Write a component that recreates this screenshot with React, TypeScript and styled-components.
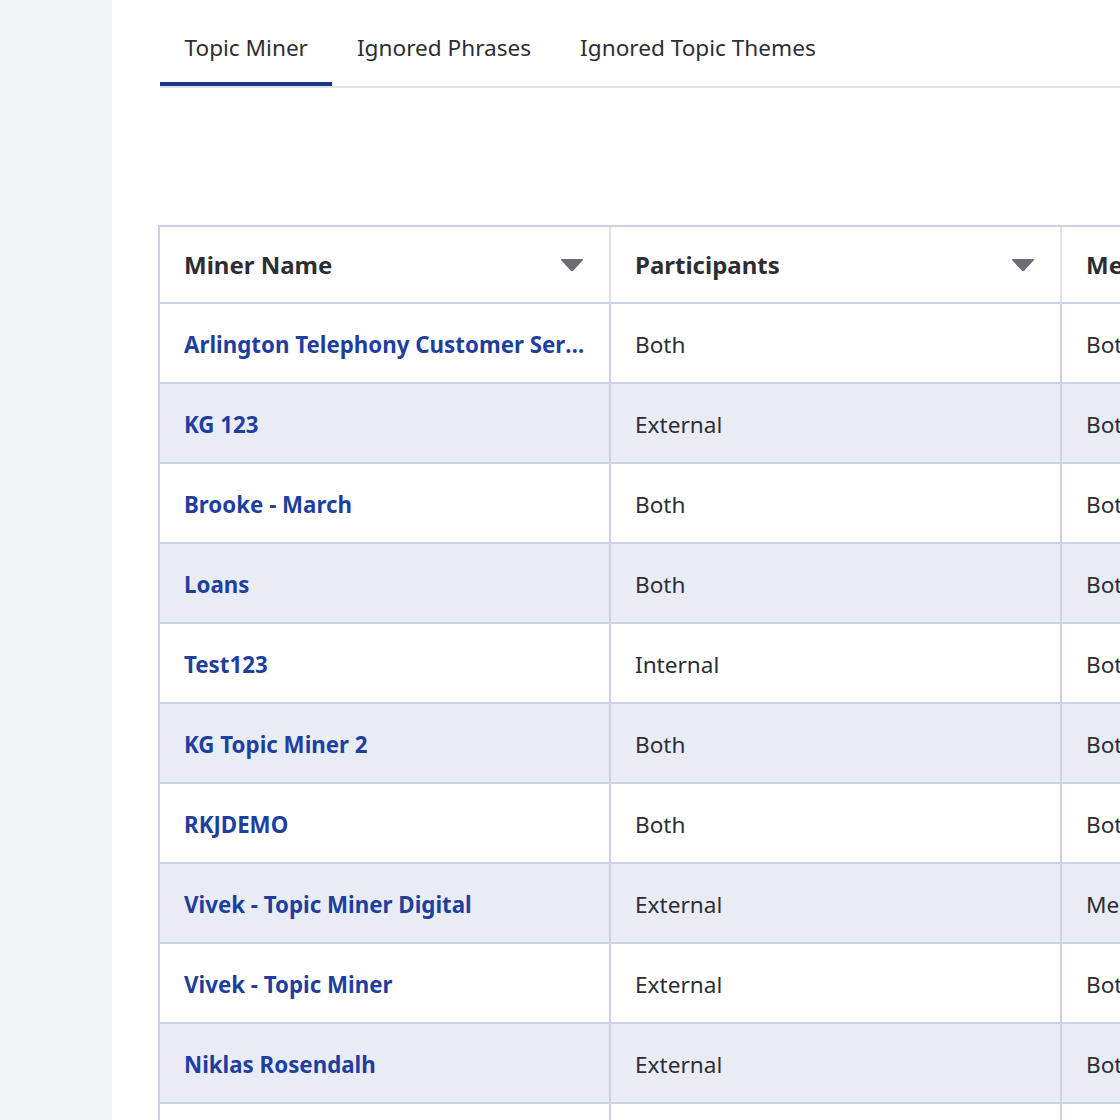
import React from "react";
import styled, { createGlobalStyle } from "styled-components";

const Global = createGlobalStyle`
  html, body { margin: 0; padding: 0; background: #ffffff; overflow: hidden; }
  body { font-family: "Noto Sans", "Open Sans", sans-serif; }
  * { box-sizing: border-box; }
`;

const Page = styled.div`
  display: flex;
  width: 1120px;
  height: 1120px;
  overflow: hidden;
`;

const Sidebar = styled.aside`
  flex: 0 0 112px;
  background: #f3f5f9;
`;

const Main = styled.main`
  flex: 1;
  min-width: 0;
  padding-left: 48px;
  overflow: hidden;
  background: #ffffff;
`;

const TabList = styled.nav`
  display: flex;
  border-bottom: 2px solid #dfe2ee;
  height: 88px;
  align-items: flex-end;
`;

const Tab = styled.div<{ $active?: boolean }>`
  padding: 13px 24.5px 0;
  height: 86px;
  display: flex;
  align-items: center;
  font-size: 22.6px;
  color: #2d2e33;
  white-space: nowrap;
  border-bottom: 4px solid ${(p) => (p.$active ? "#1c3583" : "transparent")};
`;

const TableWrap = styled.div`
  margin-top: 137px;
  margin-left: -2px;
  width: 1400px;
  border-top: 2px solid #cbd3e2;
  border-left: 2px solid #cbd3e2;
`;

const Row = styled.div<{ $striped?: boolean; $header?: boolean }>`
  display: grid;
  grid-template-columns: 451px 451px 451px;
  height: ${(p) => (p.$header ? "77px" : "80px")};
  background: ${(p) => (p.$striped ? "#e9ecf4" : "#ffffff")};
`;

const Cell = styled.div<{ $header?: boolean }>`
  display: flex;
  align-items: center;
  justify-content: space-between;
  padding: ${(p) => (p.$header ? "0 25px 0 24px" : "2px 16px 0 24px")};
  border-right: 2px solid ${(p) => (p.$header ? "#dde2ec" : "#cbd3e2")};
  border-bottom: 2px solid #cbd3e2;
  font-size: ${(p) => (p.$header ? "24px" : "22.6px")};
  color: #2d2e33;
  white-space: nowrap;
  overflow: hidden;
  font-weight: ${(p) => (p.$header ? 700 : 400)};
`;

const LinkText = styled.span`
  color: #1f3f9f;
  font-weight: 700;
  font-size: 22.3px;
  overflow: hidden;
  text-overflow: ellipsis;
  white-space: nowrap;
  max-width: 405px;
`;

const Caret = () => (
  <svg width="24" height="14" viewBox="0 0 24 14">
    <path d="M2 1 H22 Q24 1 22.6 2.6 L13.4 12.4 Q12 14 10.6 12.4 L1.4 2.6 Q0 1 2 1 Z" fill="#6b6d75" />
  </svg>
);

const rows = [
  ["Arlington Telephony Customer Service Miner", "Both", "Both"],
  ["KG 123", "External", "Both"],
  ["Brooke - March", "Both", "Both"],
  ["Loans", "Both", "Both"],
  ["Test123", "Internal", "Both"],
  ["KG Topic Miner 2", "Both", "Both"],
  ["RKJDEMO", "Both", "Both"],
  ["Vivek - Topic Miner Digital", "External", "Meeting"],
  ["Vivek - Topic Miner", "External", "Both"],
  ["Niklas Rosendalh", "External", "Both"],
  ["Topic Miner", "Both", "Both"],
];

export default function App() {
  return (
    <Page>
      <Global />
      <Sidebar />
      <Main>
        <TabList>
          <Tab $active>Topic Miner</Tab>
          <Tab>Ignored Phrases</Tab>
          <Tab>Ignored Topic Themes</Tab>
        </TabList>
        <TableWrap>
          <Row $header>
            <Cell $header>
              Miner Name
              <Caret />
            </Cell>
            <Cell $header>
              Participants
              <Caret />
            </Cell>
            <Cell $header>Media</Cell>
          </Row>
          {rows.map((r, i) => (
            <Row key={i} $striped={i % 2 === 1}>
              <Cell>
                <LinkText>{r[0]}</LinkText>
              </Cell>
              <Cell>{r[1]}</Cell>
              <Cell>{r[2]}</Cell>
            </Row>
          ))}
        </TableWrap>
      </Main>
    </Page>
  );
}
